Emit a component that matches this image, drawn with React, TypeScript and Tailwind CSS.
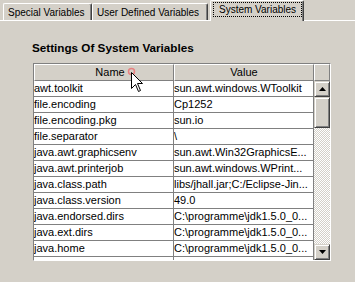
const rows: [string, string][] = [
  ["awt.toolkit", "sun.awt.windows.WToolkit"],
  ["file.encoding", "Cp1252"],
  ["file.encoding.pkg", "sun.io"],
  ["file.separator", "\\"],
  ["java.awt.graphicsenv", "sun.awt.Win32GraphicsE..."],
  ["java.awt.printerjob", "sun.awt.windows.WPrint..."],
  ["java.class.path", "libs/jhall.jar;C:/Eclipse-Jin..."],
  ["java.class.version", "49.0"],
  ["java.endorsed.dirs", "C:\\programme\\jdk1.5.0_0..."],
  ["java.ext.dirs", "C:\\programme\\jdk1.5.0_0..."],
  ["java.home", "C:\\programme\\jdk1.5.0_0..."],
  ["", ""],
];

const raised =
  "border border-t-[#d4d0c8] border-l-[#d4d0c8] border-r-[#404040] border-b-[#404040] shadow-[inset_1px_1px_#fff,inset_-1px_-1px_#808080] bg-[#d4d0c8]";

function ScrollButton({ up }: { up?: boolean }) {
  return (
    <div className={`h-[16px] w-[16px] flex items-center justify-center ${raised}`}>
      <svg width="7" height="4" viewBox="0 0 7 4">
        {up ? <path d="M3.5 0 L7 4 L0 4 Z" fill="#000" /> : <path d="M0 0 L7 0 L3.5 4 Z" fill="#000" />}
      </svg>
    </div>
  );
}

function Tab({ label, width, selected }: { label: string; width: string; selected?: boolean }) {
  if (selected) {
    return (
      <div
        className={`${width} h-[21px] -mb-px relative z-10 bg-[#d4d0c8] border-t border-l border-white border-r border-r-[#404040] shadow-[inset_-1px_0_#808080] rounded-t-[2px] pl-[2px] pt-[1px]`}
      >
        <div className="h-[15px] w-[89px] border border-dotted border-black leading-[13px] pl-[5px]">{label}</div>
      </div>
    );
  }
  return (
    <div
      className={`${width} h-[17px] bg-[#d4d0c8] border-t border-l border-white border-r border-r-[#404040] shadow-[inset_-1px_0_#808080] rounded-t-[2px] pl-[4px] pt-[2px] leading-[13px]`}
    >
      {label}
    </div>
  );
}

export default function App() {
  return (
    <div className="relative w-[355px] h-[282px] overflow-hidden bg-[#d4d0c8] text-black font-['Liberation_Sans',Arial,sans-serif]">
      <div className="flex items-end h-[21px] border-b border-white pl-[3px] text-[10px]">
        <Tab label="Special Variables" width="w-[89px]" />
        <Tab label="User Defined Variables" width="w-[116px]" />
        <div className="w-[2px]" />
        <Tab label="System Variables" width="w-[94px]" selected />
      </div>

      <h3 className="ml-[32px] mt-[20px] text-[11.7px] leading-[14px] font-bold">Settings Of System Variables</h3>

      <div className="ml-[33px] mt-[8px] w-[298px] h-[198px] border border-t-[#808080] border-l-[#808080] border-r-white border-b-white text-[11px]">
        <div className="flex h-[17px] leading-[15px]">
          <div className="w-[140px] border-t border-l border-white border-r border-b border-r-[#808080] border-b-[#808080] flex justify-center pl-[12px]">
            Name
          </div>
          <div className="w-[140px] border-t border-l border-white border-r border-b border-r-[#808080] border-b-[#808080] flex justify-center">
            Value
          </div>
          <div className="w-[16px] border-t border-l border-white border-r border-b border-r-[#808080] border-b-[#808080]" />
        </div>
        <div className="flex h-[179px]">
          <div className="w-[280px] overflow-hidden bg-white">
            {rows.map(([k, v], i) => (
              <div key={i} className="flex h-[16px] border-b border-[#808080] leading-[15px]">
                <div className="w-[140px] border-r border-[#808080] whitespace-nowrap overflow-hidden">{k}</div>
                <div className="w-[140px] border-r border-[#808080] whitespace-nowrap overflow-hidden">{v}</div>
              </div>
            ))}
          </div>
          <div className="w-[16px] flex flex-col">
            <ScrollButton up />
            <div className={`h-[31px] w-[16px] ${raised}`} />
            <div className="flex-1 bg-[conic-gradient(#d4d0c8_25%,#fff_0_50%,#d4d0c8_0_75%,#fff_0)] bg-[length:2px_2px]" />
            <ScrollButton />
          </div>
        </div>
      </div>

      <svg className="absolute left-[127px] top-[67px]" width="10" height="10" viewBox="0 0 10 10">
        <circle cx="4.5" cy="4.5" r="3" fill="none" stroke="#e88080" strokeWidth="1.5" />
      </svg>
      <svg className="absolute left-[131px] top-[72px]" width="13" height="21" viewBox="0 0 13 21">
        <path d="M0.5 0.5 V16.5 L4.5 12.5 L7.5 19.5 L9.5 18.5 L6.5 11.5 H11.5 Z" fill="#fff" stroke="#000" strokeWidth="1" />
      </svg>
    </div>
  );
}
